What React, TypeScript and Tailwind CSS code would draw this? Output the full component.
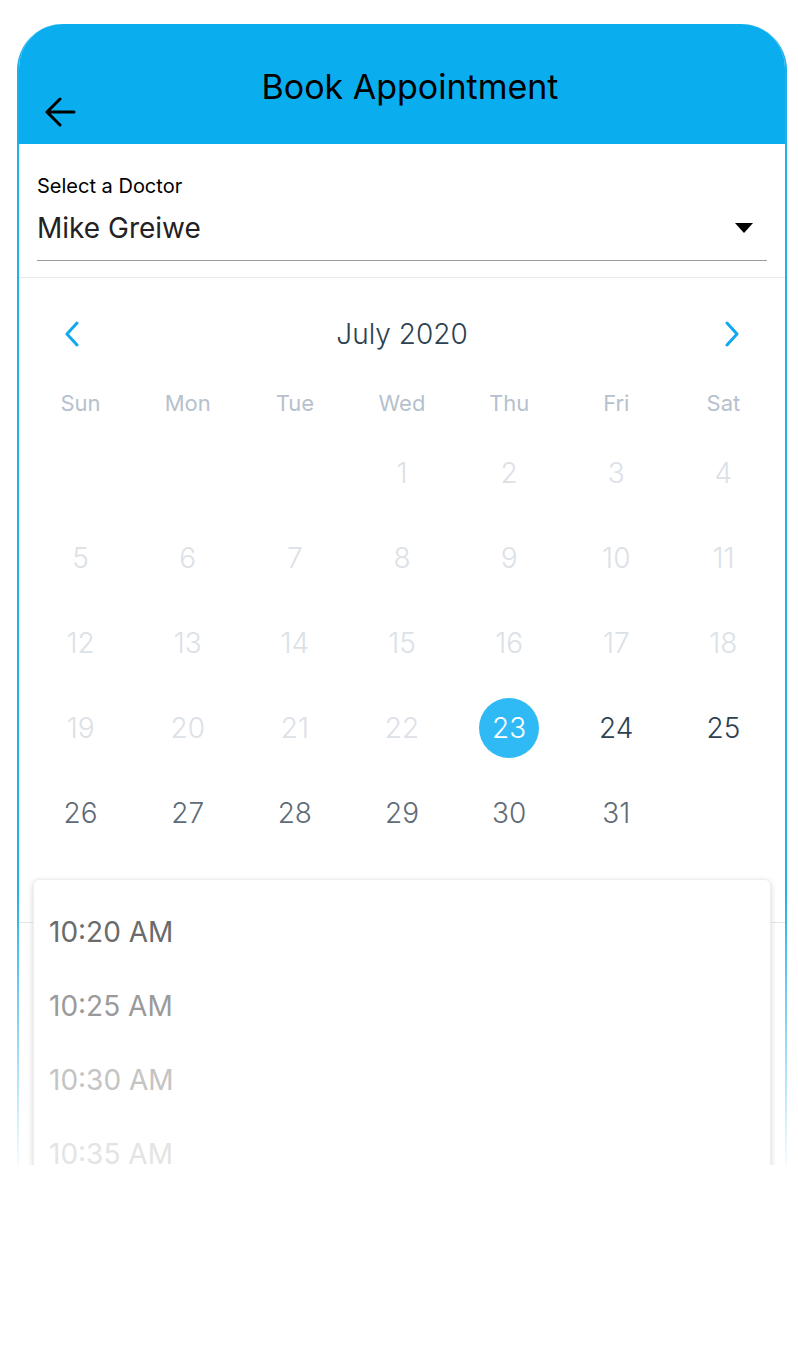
import React from "react";

const FONT = { fontFamily: "Inter, 'Noto Sans', sans-serif" };

type Day = { n: number | null; kind: "empty" | "disabled" | "active" | "later" | "selected" };

function buildDays(): Day[] {
  const days: Day[] = [];
  for (let i = 0; i < 3; i++) days.push({ n: null, kind: "empty" });
  for (let d = 1; d <= 31; d++) {
    let kind: Day["kind"] = "disabled";
    if (d === 23) kind = "selected";
    else if (d === 24 || d === 25) kind = "active";
    else if (d > 25) kind = "later";
    days.push({ n: d, kind });
  }
  days.push({ n: null, kind: "empty" });
  return days;
}

const WEEK = ["Sun", "Mon", "Tue", "Wed", "Thu", "Fri", "Sat"];
const TIMES = [
  { t: "10:20 AM", c: "text-[#6b6b6b]" },
  { t: "10:25 AM", c: "text-[#9a9a9a]" },
  { t: "10:30 AM", c: "text-[#c4c4c4]" },
  { t: "10:35 AM", c: "text-[#e4e4e4]" },
];

function DayCell({ d }: { d: Day }) {
  if (d.kind === "empty") return <div className="h-[85px]" />;
  if (d.kind === "selected")
    return (
      <div className="h-[85px] flex items-center justify-center">
        <div className="w-[60px] h-[60px] rounded-full bg-[#2fbaf5] flex items-center justify-center text-white text-[28px] font-light leading-none">
          {d.n}
        </div>
      </div>
    );
  const color =
    d.kind === "disabled" ? "text-[#dbe1e7]" : d.kind === "active" ? "text-[#2d4150]" : "text-[#606b76]";
  return (
    <div className={`h-[85px] flex items-center justify-center text-[28px] font-light leading-none ${color}`}>{d.n}</div>
  );
}

export default function App() {
  const days = buildDays();
  return (
    <div className="min-h-[1360px] bg-white pt-[24px] px-[17px]" style={FONT}>
      <div className="w-[770px] h-[1141px] rounded-t-[46px] px-[2px] bg-[linear-gradient(to_bottom,#1fb0ea_0%,#1fb0ea_76%,rgba(31,176,234,0.04)_100%)]">
        <div className="h-full rounded-t-[44px] bg-white overflow-hidden flex flex-col">
          {/* Header */}
          <div className="h-[120px] bg-[#0aaeef] flex items-start shrink-0">
            <div className="pl-[25px] mt-[73px]">
              <svg width="32" height="30" viewBox="0 0 32 30" fill="none">
                <path d="M30 15H3M16 2L3 15l13 13" stroke="#000" strokeWidth="3" strokeLinecap="round" strokeLinejoin="round" />
              </svg>
            </div>
            <div className="flex-1 text-center mt-[42px] text-[34px] leading-[42px] text-black">Book Appointment</div>
            <div className="w-[41px]" />
          </div>

          {/* Doctor select */}
          <div className="pt-[30px] pb-[16px] px-[18px] border-b border-[#e9e9e9] shrink-0">
            <div className="text-[20px] leading-[24px] text-black">Select a Doctor</div>
            <div className="mt-[13px] pb-[15px] border-b border-[#9c9c9c] flex items-center justify-between">
              <span className="text-[28px] leading-[34px] text-[#222]">Mike Greiwe</span>
              <svg width="18" height="10" viewBox="0 0 18 10" className="mr-[14px]">
                <path d="M0 0h18L9 10z" fill="#000" />
              </svg>
            </div>
          </div>

          {/* Calendar */}
          <div className="px-[8px] pt-[39px] pb-[67px] border-b border-[#e6e6e6] shrink-0">
            <div className="flex items-center justify-between px-[37px]">
              <svg width="16" height="26" viewBox="0 0 16 26" fill="none">
                <path d="M13 2L3 13l10 11" stroke="#12a8ee" strokeWidth="3" strokeLinecap="round" strokeLinejoin="round" />
              </svg>
              <div className="text-[28px] font-light leading-[34px] text-[#2d4150]">July 2020</div>
              <svg width="16" height="26" viewBox="0 0 16 26" fill="none">
                <path d="M3 2l10 11L3 24" stroke="#12a8ee" strokeWidth="3" strokeLinecap="round" strokeLinejoin="round" />
              </svg>
            </div>
            <div className="grid grid-cols-7 mt-[38px]">
              {WEEK.map((w) => (
                <div key={w} className="text-center text-[22px] leading-[28px] text-[#b6c1cd]">
                  {w}
                </div>
              ))}
            </div>
            <div className="grid grid-cols-7 mt-[13px]">
              {days.map((d, i) => (
                <DayCell key={i} d={d} />
              ))}
            </div>
          </div>

          {/* Time picker card */}
          <div className="relative z-10 -mt-[44px] mx-[14px] rounded-[6px] bg-white border border-[#eeeeee] shadow-[0_2px_6px_rgba(0,0,0,0.16)] pt-[15px] px-[15px] shrink-0">
            {TIMES.map((x) => (
              <div key={x.t} className={`h-[74px] flex items-center text-[28px] leading-none ${x.c}`}>
                {x.t}
              </div>
            ))}
          </div>
        </div>
      </div>
    </div>
  );
}
